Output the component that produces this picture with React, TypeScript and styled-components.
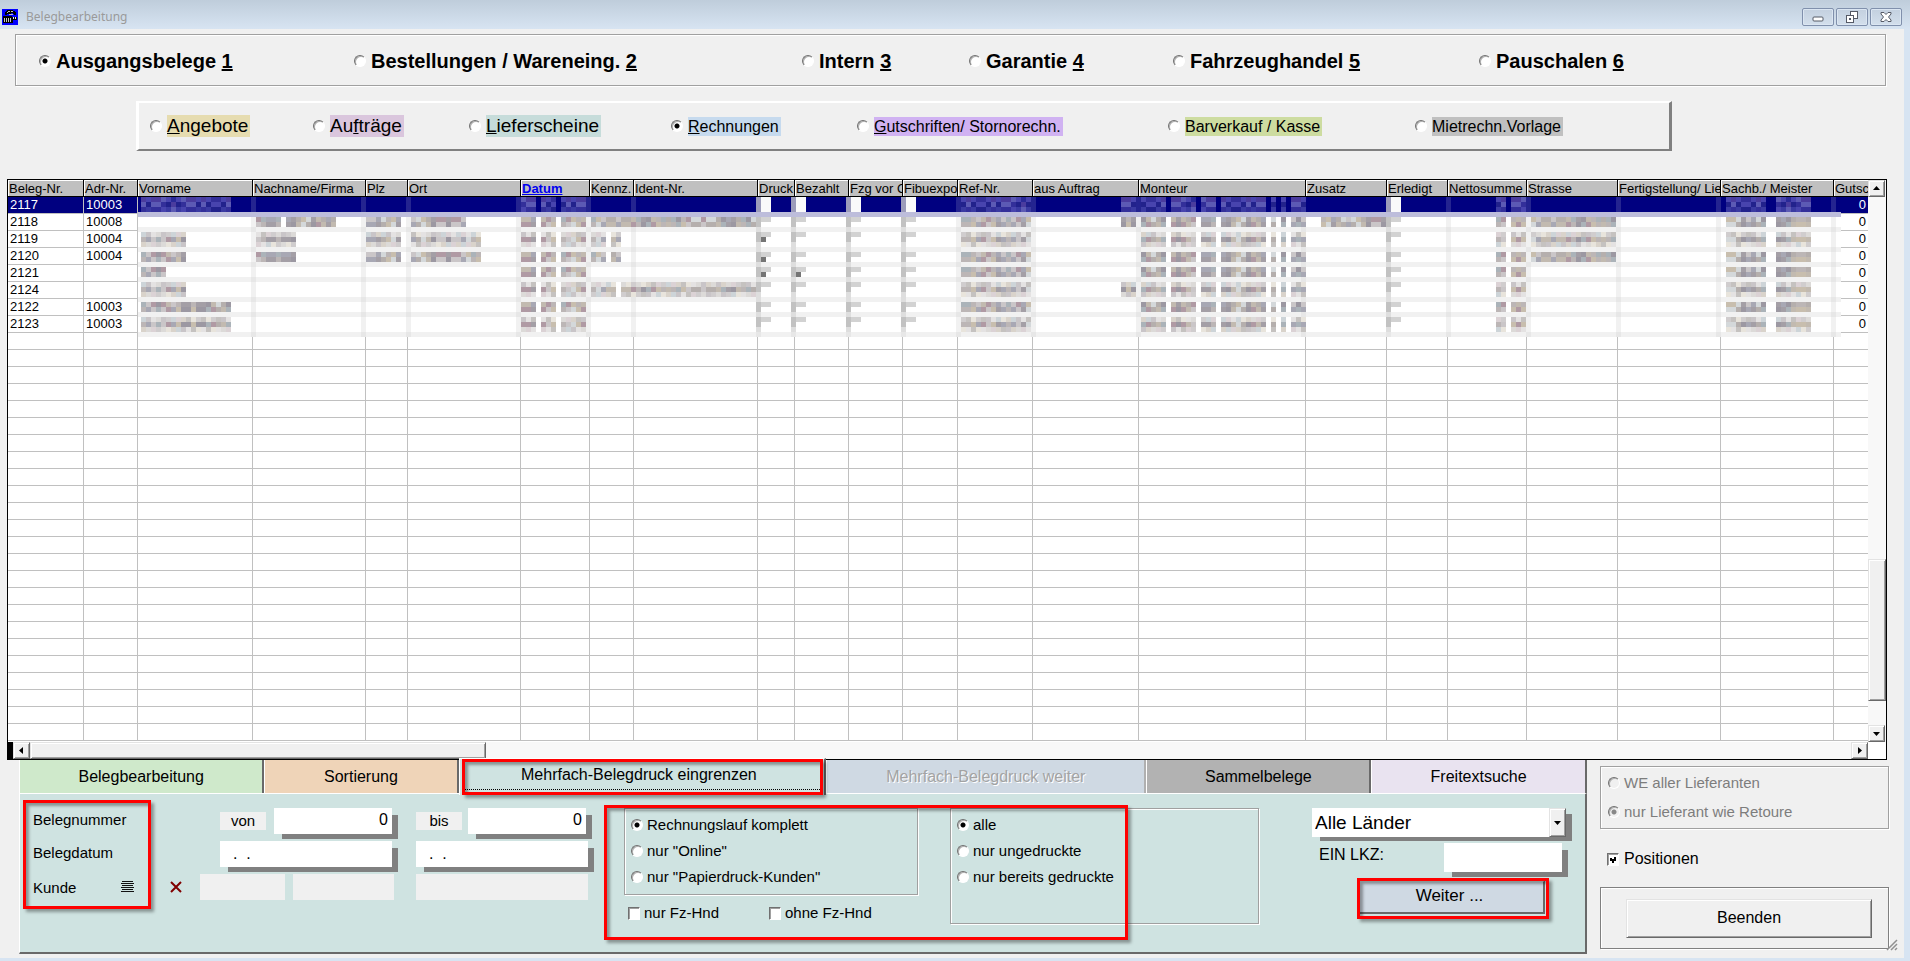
import React from "react";
import styled, { createGlobalStyle, css } from "styled-components";

const Global = createGlobalStyle`
  * { box-sizing: border-box; }
  body {
    margin: 0;
    background: #f0f0f0;
    color: #000;
    font-family: "Liberation Sans", Arial, sans-serif;
    font-size: 15px;
  }
  button, input, select { font: inherit; color: inherit; margin: 0; }
  fieldset { margin: 0; padding: 0; min-width: 0; }
`;

const Window = styled.div`
  display: flex;
  flex-direction: column;
  min-height: 100vh;
  border-bottom: 3px solid #d7e4f2;
`;

const TitleBar = styled.header`
  display: flex;
  align-items: center;
  gap: 8px;
  height: 29px;
  padding: 5px 8px 0 2px;
  background: linear-gradient(#bfcddb, #d7e4f2);
`;

const Title = styled.h1`
  flex: 1;
  margin: 0;
  font: 12px/16px "Noto Sans", "Open Sans", sans-serif;
  color: #9a9a9a;
`;

const WindowButtons = styled.div`
  display: flex;
  gap: 2px;
`;

const WindowButton = styled.button`
  display: flex;
  align-items: center;
  justify-content: center;
  width: 32px;
  height: 18px;
  padding: 0;
  border: 1px solid #8090ac;
  border-radius: 2px;
  background: linear-gradient(#c3d0df, #d3dfec);
  box-shadow: inset 0 0 0 1px #dbe6f2;
`;

const Body = styled.main`
  flex: 1;
  border-right: 6px solid #d7e4f2;
  padding-top: 5px;
`;

const etched = css`
  border: 1px solid #a0a0a0;
  box-shadow: 1px 1px 0 #fff, inset 1px 1px 0 #fff;
`;

const AreaBar = styled.fieldset`
  ${etched}
  display: grid;
  grid-template-columns: 315fr 448fr 167fr 204fr 306fr 406fr;
  align-items: center;
  height: 52px;
  margin: 0 18px 15px 15px;
  padding: 2px 0 0 23px;
`;

const KindBar = styled.fieldset`
  display: grid;
  grid-template-columns: 163fr 156fr 202fr 186fr 311fr 247fr 254fr;
  align-items: center;
  height: 50px;
  margin: 0 232px 28px 136px;
  padding-left: 11px;
  border: solid;
  border-width: 2px 3px 2px 3px;
  border-color: #fff #808080 #808080 #fff;
`;

const Option = styled.label<{ $size: number; $bold?: boolean; $gap?: number; $off?: boolean }>`
  display: flex;
  align-items: center;
  gap: ${(p) => p.$gap ?? 5}px;
  font-size: ${(p) => p.$size}px;
  font-weight: ${(p) => (p.$bold ? 700 : 400)};
  line-height: 18px;
  white-space: nowrap;
  color: ${(p) => (p.$off ? "#7d7d7d" : "#000")};
`;

const Radio = styled.input.attrs({ type: "radio" })`
  appearance: none;
  flex: none;
  width: 12px;
  height: 12px;
  border: 1px solid;
  border-color: #707070 #fff #fff #707070;
  border-radius: 50%;
  background: #fff;
  box-shadow: inset 1px 1px 0 #b0b0b0;
  &:checked {
    background: radial-gradient(circle, #000 0 2px, #fff 3px);
  }
  &:disabled {
    background: #f0f0f0;
  }
  &:disabled:checked {
    background: radial-gradient(circle, #888 0 2px, #f0f0f0 3px);
  }
`;

const Check = styled.input.attrs({ type: "checkbox" })`
  appearance: none;
  flex: none;
  width: 12px;
  height: 13px;
  border: 1px solid;
  border-color: #707070 #fff #fff #707070;
  background: #fff;
  box-shadow: inset 1px 1px 0 #a0a0a0;
  &:checked {
    background: linear-gradient(#000, #000) 4px 5px / 2px 4px no-repeat,
      linear-gradient(#000, #000) 2px 4px / 2px 3px no-repeat,
      linear-gradient(#000, #000) 6px 3px / 2px 4px no-repeat, #fff;
  }
`;

const Tag = styled.span<{ $color: string; $tall?: boolean }>`
  display: block;
  padding-right: 2px;
  line-height: ${(p) => (p.$tall ? 22 : 19)}px;
  background: ${(p) => p.$color};
`;

const GridFrame = styled.section`
  margin: 0 17px 0 7px;
  border: 1px solid #000;
`;

const GridTop = styled.div`
  display: flex;
`;

const TableArea = styled.div`
  position: relative;
  flex: 1;
  min-width: 0;
  padding-bottom: 1px;
  background: #fff;
`;

const Table = styled.table`
  width: 100%;
  table-layout: fixed;
  border-collapse: separate;
  border-spacing: 0;
  font-size: 13px;
`;

const Head = styled.th`
  height: 17px;
  padding: 1px 0 0 1px;
  overflow: hidden;
  border-right: 1px solid #000;
  border-bottom: 1px solid #000;
  background: #c0c0c0;
  box-shadow: inset 1px 1px 0 #fff;
  font-weight: 400;
  line-height: 15px;
  text-align: left;
  white-space: nowrap;
  &:last-child {
    border-right: 0;
  }
`;

const SortLink = styled.a`
  color: #0000f0;
  font-weight: 700;
`;

const Row = styled.tr<{ $selected?: boolean }>`
  background: ${(p) => (p.$selected ? "#000080" : "#fff")};
  color: ${(p) => (p.$selected ? "#fff" : "#000")};
`;

const Cell = styled.td<{ $right?: boolean }>`
  height: 17px;
  padding: 0 2px;
  border-right: 1px solid #c0c0c0;
  border-bottom: 1px solid #c0c0c0;
  line-height: 16px;
  text-align: ${(p) => (p.$right ? "right" : "left")};
  &:last-child {
    border-right: 0;
  }
`;

const Redaction = styled.svg`
  position: absolute;
  left: 128px;
  top: 17px;
`;

const raised = css`
  border: 1px solid;
  border-color: #e3e3e3 #696969 #696969 #e3e3e3;
  background: #f0f0f0;
  box-shadow: inset 1px 1px 0 #fff, inset -1px -1px 0 #a0a0a0;
`;

const ScrollButton = styled.button`
  ${raised}
  display: flex;
  flex: none;
  align-items: center;
  justify-content: center;
  width: 17px;
  height: 17px;
  padding: 0;
`;

const VScroll = styled.div`
  display: flex;
  flex-direction: column;
  width: 18px;
  background: #f8f8f8;
`;

const HScroll = styled.div`
  display: flex;
  height: 17px;
  background: #f8f8f8;
`;

const Thumb = styled.div<{ $share: number }>`
  ${raised}
  flex: ${(p) => p.$share} 1 0;
`;

const Track = styled.div<{ $share: number }>`
  flex: ${(p) => p.$share} 1 0;
`;

const BlackCorner = styled.div`
  width: 5px;
  background: #000;
`;

const WhiteCorner = styled.div`
  width: 18px;
  background: #fff;
`;

const Bottom = styled.section`
  display: flex;
  gap: 13px;
  padding: 0 15px 4px 19px;
`;

const TabArea = styled.div`
  flex: 1;
  min-width: 0;
`;

const Tabs = styled.div`
  display: flex;
  height: 33px;
`;

const Tab = styled.button<{ $share: number; $color: string; $active?: boolean }>`
  position: relative;
  flex: ${(p) => p.$share} 1 0;
  padding: 0;
  border: 0;
  border-left: 1px solid #fff;
  border-right: 2px solid #696969;
  background: ${(p) => p.$color};
  font-size: 16px;
  white-space: nowrap;
  &:disabled {
    border-right-color: #b0b0b0;
    color: #a3a3a3;
    text-shadow: 1px 1px 0 #fff;
  }
  ${(p) =>
    p.$active &&
    css`
      margin: -2px 0 -2px;
      padding: 0 6px 4px 0;
      border-top: 1px solid #fff;
      z-index: 1;
    `}
`;

const FocusLine = styled.span`
  position: absolute;
  left: 4px;
  right: 4px;
  bottom: 5px;
  border-bottom: 1px dotted #000;
`;

const Callout = styled.span<{ $inset: string }>`
  position: absolute;
  inset: ${(p) => p.$inset};
  border: 3px solid #f00;
  box-shadow: 3px 3px 3px rgba(0, 0, 0, 0.35), inset 3px 3px 3px rgba(0, 0, 0, 0.35);
  pointer-events: none;
`;

const Panel = styled.div`
  display: flex;
  height: 161px;
  padding: 14px 14px 0 13px;
  border: solid;
  border-width: 1px 2px 2px 1px;
  border-color: #fff #696969 #696969 #fff;
  background: #cfe3e1;
`;

const Labels = styled.div`
  position: relative;
  width: 108px;
  height: 93px;
`;

const FieldRow = styled.div<{ $indent?: number }>`
  display: flex;
  align-items: center;
  height: 26px;
  margin-bottom: 7px;
  padding-left: ${(p) => p.$indent ?? 0}px;
`;

const Caption = styled.span`
  line-height: 18px;
  padding-bottom: 2px;
`;

const Fields = styled.div`
  margin-left: 29px;
`;

const Mini = styled.label`
  width: 46px;
  background: #f0f0f0;
  line-height: 18px;
  text-align: center;
`;

const TextBox = styled.input<{ $width: number; $start?: boolean; $tall?: boolean }>`
  width: ${(p) => p.$width}px;
  height: ${(p) => (p.$tall ? 29 : 26)}px;
  padding: ${(p) => (p.$start ? "0 4px 0 13px" : "0 4px 2px 4px")};
  border: 0;
  border-radius: 0;
  background: #fff;
  box-shadow: 7px 6px 0 -1px #808080;
  font-size: 16px;
  text-align: ${(p) => (p.$start ? "left" : "right")};
`;

const ReadOnlyBox = styled.input.attrs({ readOnly: true })<{ $width: number }>`
  width: ${(p) => p.$width}px;
  height: 26px;
  border: 0;
  background: #f0f0f0;
`;

const Gap = styled.span<{ $width: number }>`
  flex: none;
  width: ${(p) => p.$width}px;
`;

const IconButton = styled.button`
  display: flex;
  padding: 0;
  border: 0;
  background: none;
`;

const Filters = styled.div`
  position: relative;
  display: flex;
  gap: 32px;
  margin-left: 36px;
`;

const OptionBox = styled.fieldset<{ $width: number; $height: number }>`
  ${etched}
  display: flex;
  flex-direction: column;
  gap: 8px;
  width: ${(p) => p.$width}px;
  height: ${(p) => p.$height}px;
  padding: 7px 0 0 6px;
`;

const CheckRow = styled.div`
  display: flex;
  gap: 50px;
  padding: 9px 0 0 4px;
`;

const Country = styled.div`
  margin-left: auto;
  width: 259px;
`;

const SelectWrap = styled.div`
  position: relative;
  width: 254px;
  height: 29px;
  margin-bottom: 6px;
  background: #fff;
  box-shadow: 7px 5px 0 -1px #808080;
`;

const Select = styled.select`
  appearance: none;
  width: 100%;
  height: 29px;
  padding: 0 0 0 3px;
  border: 0;
  background: none;
  font-size: 19px;
`;

const DropArrow = styled.span`
  ${raised}
  position: absolute;
  top: 0;
  right: 0;
  display: flex;
  align-items: center;
  justify-content: center;
  width: 17px;
  height: 29px;
  pointer-events: none;
`;

const LkzRow = styled.div`
  display: flex;
  justify-content: space-between;
  padding: 0 9px 0 7px;
  font-size: 16px;
  line-height: 24px;
`;

const NextWrap = styled.div`
  position: relative;
  width: 192px;
  height: 41px;
  margin: 6px 0 0 45px;
  padding: 2px 4px 5px 0;
`;

const NextButton = styled.button`
  width: 100%;
  height: 100%;
  padding: 0 3px 3px 0;
  border: 2px solid;
  border-color: #cfe3e1 #696969 #696969 #cfe3e1;
  background: #cfd9e3;
  font-size: 17px;
`;

const Side = styled.aside`
  position: relative;
  width: 289px;
  padding-top: 6px;
`;

const SupplierBox = styled.fieldset`
  ${etched}
  display: flex;
  flex-direction: column;
  gap: 11px;
  height: 63px;
  padding: 7px 0 0 7px;
`;

const PositionRow = styled.div`
  padding: 21px 0 19px 7px;
`;

const QuitBox = styled.div`
  height: 62px;
  padding: 11px 16px 0 25px;
  border: 1px solid #808080;
  box-shadow: inset 1px 1px 0 #fff, 1px 1px 0 #fff;
`;

const QuitButton = styled.button`
  ${raised}
  width: 100%;
  height: 39px;
  padding-bottom: 3px;
  font-size: 16px;
`;

const Grip = styled.svg`
  position: absolute;
  right: -9px;
  bottom: 3px;
`;

const ToolIcon = () => (
  <svg width="16" height="16" viewBox="0 0 16 16" shapeRendering="crispEdges" aria-hidden="true">
    <rect width="16" height="16" fill="#0000ff" />
    <path d="M3 5V3h1V2h1V1h6v1h2v1h1v3h-2V5h-1V4H9v1H5v1H3z" fill="#000" />
    <path d="M5 3h1V2h2v1H6v1H5zM9 2h2v1H9zM7 5h4v1H7z" fill="#c0c0c0" />
    <path d="M1 7h9v1h5v3h-4v3H1z" fill="#000" />
    <path d="M2 9h1v4H2zM4 9h1v4H4zM6 9h1v4H6zM8 9h1v4H8z" fill="#c8c8c8" />
    <path d="M11 8h1v2h-1zM13 8h1v2h-1z" fill="#e8e8e8" />
  </svg>
);

const Arrow = ({ dir }: { dir: "up" | "down" | "left" | "right" }) => {
  const shapes = {
    up: "M1 6h7L4.500 2z",
    down: "M1 3h7L4.500 7z",
    left: "M6 1v7L2 4.500z",
    right: "M3 1v7l4-3.500z",
  };
  return (
    <svg width="9" height="9" viewBox="0 0 9 9" aria-hidden="true">
      <path d={shapes[dir]} fill="#000" />
    </svg>
  );
};

const columns: [string, number | null][] = [
  ["Beleg-Nr.", 76], ["Adr-Nr.", 54], ["Vorname", 115], ["Nachname/Firma", 113], ["Plz", 42],
  ["Ort", 113], ["Datum", 69], ["Kennz.", 44], ["Ident-Nr.", 124], ["Druck", 37],
  ["Bezahlt", 54], ["Fzg vor O", 54], ["Fibuexpo", 55], ["Ref-Nr.", 75], ["aus Auftrag", 106],
  ["Monteur", 167], ["Zusatz", 81], ["Erledigt", 61], ["Nettosumme", 79], ["Strasse", 91],
  ["Fertigstellung/ Lie", 103], ["Sachb./ Meister", 113], ["Gutsc", null],
];

const records = [
  ["2117", "10003"], ["2118", "10008"], ["2119", "10004"], ["2120", "10004"],
  ["2121", ""], ["2124", ""], ["2122", "10003"], ["2123", "10003"],
];
const ROWS = 32;

/* Masked customer data: a mosaic of 5px blocks over the personal columns. */
const OX = 136;
const bandsX = [251, 361, 406, 516, 586, 631, 756, 791, 846, 901, 956, 1031, 1136, 1301, 1386, 1446, 1526, 1616, 1716, 1831];
const bandsY = [6, 10, 13, 16, 20, 23, 27];
const lineStart = [0, 4, 7, 11, 14, 17, 21, 24];
const lineCount = [3, 2, 3, 2, 2, 3, 2, 3];
const all = [0, 1, 2, 3, 4, 5, 6, 7];
const smudges: { x: number; n: number; rows: number[] }[] = [
  { x: 141, n: 18, rows: [0, 6, 7] }, { x: 141, n: 9, rows: [2, 3, 5] }, { x: 141, n: 5, rows: [4] },
  { x: 256, n: 5, rows: [1] }, { x: 286, n: 10, rows: [1] }, { x: 256, n: 8, rows: [2, 3] },
  { x: 366, n: 7, rows: [1, 2, 3] }, { x: 411, n: 11, rows: [1] }, { x: 411, n: 14, rows: [2, 3] },
  { x: 521, n: 3, rows: all }, { x: 541, n: 3, rows: all }, { x: 561, n: 5, rows: all },
  { x: 591, n: 34, rows: [1] }, { x: 591, n: 3, rows: [2, 3] }, { x: 611, n: 2, rows: [2, 3] },
  { x: 591, n: 5, rows: [5] }, { x: 621, n: 27, rows: [5] },
  { x: 961, n: 14, rows: all }, { x: 1121, n: 3, rows: [0, 1, 5] },
  { x: 1141, n: 5, rows: all }, { x: 1171, n: 5, rows: all }, { x: 1201, n: 3, rows: all },
  { x: 1221, n: 9, rows: all }, { x: 1271, n: 1, rows: all }, { x: 1281, n: 1, rows: all }, { x: 1291, n: 3, rows: all },
  { x: 1321, n: 13, rows: [1] }, { x: 1496, n: 2, rows: all }, { x: 1511, n: 3, rows: all },
  { x: 1531, n: 17, rows: [1, 2, 3] }, { x: 1726, n: 8, rows: all }, { x: 1776, n: 7, rows: all },
];
const checks = [756, 791, 846, 901, 1386];
const darkTones = ["#a49fa6", "#b5afad", "#9c98a2", "#c2bab0", "#abb3b9", "#b09aa4", "#bcb6b6", "#cac6c8", "#c8beae", "#a8a8b4", "#d4d8da"];
const lightTones = ["#d0cdce", "#dcdad8", "#c9c5c8", "#d9d3cb", "#cdd4d8", "#dbd2d5", "#e4e2e2", "#c5c2c0", "#e8e4dc"];
const blueTones = ["#2a2a98", "#3a3aa2", "#22228c", "#4844ae", "#332f9a", "#5c5ab4", "#4a3c9e"];

const pick = (tones: string[], a: number, b: number) => tones[(a * 7 + b * 13 + ((a * a) % 17) * 3) % tones.length];

const Mosaic = () => {
  const blocks: React.ReactNode[] = [];
  const put = (x: number, row: number, fill: string, w = 5, h = 5) =>
    blocks.push(<rect key={blocks.length} x={x - OX} y={row * 5} width={w} height={h} fill={fill} />);
  put(OX + 2, 4, "#fff", 1703, 120);
  put(OX + 2, 3, "#bdbddb", 1703);
  bandsX.forEach((x) => {
    put(x, 0, "#242490", 5, 15);
    put(x, 4, "#f1f1f1", 5, 120);
  });
  bandsY.forEach((r) => put(OX + 2, r, "#f1f1f1", 1703));
  bandsX.forEach((x) => bandsY.forEach((r) => put(x, r, "#e7e7e7")));
  smudges.forEach(({ x, n, rows }) =>
    rows.forEach((r) => {
      for (let i = 0; i < n; i++) {
        for (let k = 0; k < lineCount[r]; k++) {
          const bx = x + i * 5;
          const dark = lineCount[r] === 2 || k === 1;
          const tones = r === 0 ? blueTones : dark ? darkTones : lightTones;
          put(bx, lineStart[r] + k, pick(tones, (bx - 1) / 5, k));
        }
      }
    }),
  );
  checks.forEach((x) => {
    put(x, 0, "#9c9cba", 5, 15);
    put(x + 5, 0, "#fafafa", 10, 15);
    put(x, 4, "#dedede", 5, 115);
    all.slice(1).forEach((r) => {
      put(x, lineStart[r], "#c2c2c2", 5, 10);
      put(x + 5, lineStart[r], "#d2d2d2", 10);
    });
  });
  [[761, 8], [761, 12], [761, 15], [796, 15]].forEach(([x, r]) => put(x, r, "#757575"));
  return (
    <Redaction width="1705" height="140" shapeRendering="crispEdges" aria-hidden="true">
      {blocks}
    </Redaction>
  );
};

const RadioOption = (props: {
  name: string; size: number; bold?: boolean; gap?: number; checked?: boolean; off?: boolean; children: React.ReactNode;
}) => (
  <Option $size={props.size} $bold={props.bold} $gap={props.gap} $off={props.off}>
    <Radio name={props.name} defaultChecked={props.checked} disabled={props.off} />
    <span>{props.children}</span>
  </Option>
);

export default function App() {
  return (
    <Window>
      <Global />
      <TitleBar>
        <ToolIcon />
        <Title>Belegbearbeitung</Title>
        <WindowButtons>
          <WindowButton aria-label="Minimieren">
            <svg width="12" height="12" viewBox="0 0 12 12"><rect x="1" y="6" width="10" height="4" rx="1" fill="#fff" stroke="#555a66" /></svg>
          </WindowButton>
          <WindowButton aria-label="Wiederherstellen">
            <svg width="12" height="12" viewBox="0 0 12 12" fill="#fff" stroke="#555a66" shapeRendering="crispEdges">
              <path d="M4.500 .5h7v7h-7z" /><path d="M.5 4.500h7v7h-7z" /><path d="M3.500 7.500h1v1h-1z" />
            </svg>
          </WindowButton>
          <WindowButton aria-label="Schließen">
            <svg width="12" height="12" viewBox="0 0 12 12">
              <path d="M1 1.500h3l2 2 2-2h3v1.500L8.500 6 11 9v1.500H8l-2-2-2 2H1V9l2.500-3L1 3z" fill="#fff" stroke="#555a66" />
            </svg>
          </WindowButton>
        </WindowButtons>
      </TitleBar>

      <Body>
        <AreaBar aria-label="Bereich">
          <RadioOption name="area" size={20} bold checked>Ausgangsbelege <u>1</u></RadioOption>
          <RadioOption name="area" size={20} bold>Bestellungen / Wareneing. <u>2</u></RadioOption>
          <RadioOption name="area" size={20} bold>Intern <u>3</u></RadioOption>
          <RadioOption name="area" size={20} bold>Garantie <u>4</u></RadioOption>
          <RadioOption name="area" size={20} bold>Fahrzeughandel <u>5</u></RadioOption>
          <RadioOption name="area" size={20} bold>Pauschalen <u>6</u></RadioOption>
        </AreaBar>

        <KindBar aria-label="Belegart">
          <RadioOption name="kind" size={19}><Tag $tall $color="#e6dcb0"><u>A</u>ngebote</Tag></RadioOption>
          <RadioOption name="kind" size={19}><Tag $tall $color="#dac6dd">Au<u>f</u>träge</Tag></RadioOption>
          <RadioOption name="kind" size={19}><Tag $tall $color="#c6dcda"><u>L</u>ieferscheine</Tag></RadioOption>
          <RadioOption name="kind" size={16} checked><Tag $color="#c6daee"><u>R</u>echnungen</Tag></RadioOption>
          <RadioOption name="kind" size={16}><Tag $color="#d0b2f2"><u>G</u>utschriften/ Stornorechn.</Tag></RadioOption>
          <RadioOption name="kind" size={16}><Tag $color="#cddca0">Barverkauf / Kasse</Tag></RadioOption>
          <RadioOption name="kind" size={16}><Tag $color="#c0c0c0">Mietrechn.Vorlage</Tag></RadioOption>
        </KindBar>

        <GridFrame>
          <GridTop>
            <TableArea>
              <Table>
                <colgroup>
                  {columns.map(([name, w]) => <col key={name} width={w ?? undefined} />)}
                </colgroup>
                <thead>
                  <tr>
                    {columns.map(([name]) => (
                      <Head key={name} scope="col">
                        {name === "Datum" ? <SortLink href="#datum">{name}</SortLink> : name}
                      </Head>
                    ))}
                  </tr>
                </thead>
                <tbody>
                  {Array.from({ length: ROWS }, (_, r) => (
                    <Row key={r} $selected={r === 0}>
                      {columns.map(([name], c) => (
                        <Cell key={name} $right={c === columns.length - 1}>
                          {records[r] && (c < 2 ? records[r][c] : c === columns.length - 1 ? "0" : "")}
                        </Cell>
                      ))}
                    </Row>
                  ))}
                </tbody>
              </Table>
              <Mosaic />
            </TableArea>
            <VScroll>
              <ScrollButton aria-label="Nach oben"><Arrow dir="up" /></ScrollButton>
              <Track $share={364} />
              <Thumb $share={141} />
              <Track $share={24} />
              <ScrollButton aria-label="Nach unten"><Arrow dir="down" /></ScrollButton>
            </VScroll>
          </GridTop>
          <HScroll>
            <BlackCorner />
            <ScrollButton aria-label="Nach links"><Arrow dir="left" /></ScrollButton>
            <Thumb $share={454} />
            <Track $share={1367} />
            <ScrollButton aria-label="Nach rechts"><Arrow dir="right" /></ScrollButton>
            <WhiteCorner />
          </HScroll>
        </GridFrame>

        <Bottom>
          <TabArea>
            <Tabs role="tablist">
              <Tab role="tab" $share={246} $color="#cfe9cb">Belegbearbeitung</Tab>
              <Tab role="tab" $share={194} $color="#efd4b8">Sortierung</Tab>
              <Tab role="tab" aria-selected $share={364} $color="#cfe3e1" $active>
                Mehrfach-Belegdruck eingrenzen
                <FocusLine />
                <Callout $inset="0 1px 0 2px" />
              </Tab>
              <Tab role="tab" $share={322} $color="#cfd9e3" disabled>Mehrfach-Belegdruck weiter</Tab>
              <Tab role="tab" $share={225} $color="#b2b2b2">Sammelbelege</Tab>
              <Tab role="tab" $share={216} $color="#e9e3f0">Freitextsuche</Tab>
            </Tabs>
            <Panel role="tabpanel">
              <Labels>
                <FieldRow><Caption>Belegnummer</Caption></FieldRow>
                <FieldRow><Caption>Belegdatum</Caption></FieldRow>
                <FieldRow>
                  Kunde
                  <Gap $width={45} />
                  <IconButton aria-label="Kundenliste">
                    <svg width="13" height="12" viewBox="0 0 13 12" shapeRendering="crispEdges">
                      <path d="M1 0h11v1H1zM0 2h13v1H0zM1 4h11v1H1zM0 6h13v1H0zM1 8h11v1H1zM0 10h13v1H0z" fill="#111" />
                    </svg>
                  </IconButton>
                </FieldRow>
                <Callout $inset="-8px -10px" />
              </Labels>
              <Fields>
                <FieldRow $indent={50}>
                  <Mini htmlFor="nr-von">von</Mini><Gap $width={8} />
                  <TextBox id="nr-von" $width={118} defaultValue="0" /><Gap $width={24} />
                  <Mini htmlFor="nr-bis">bis</Mini><Gap $width={6} />
                  <TextBox id="nr-bis" $width={118} defaultValue="0" />
                </FieldRow>
                <FieldRow $indent={50}>
                  <TextBox aria-label="Belegdatum von" $width={172} $start defaultValue=".  ." /><Gap $width={24} />
                  <TextBox aria-label="Belegdatum bis" $width={172} $start defaultValue=".  ." />
                </FieldRow>
                <FieldRow>
                  <IconButton aria-label="Kunde löschen">
                    <svg width="12" height="12" viewBox="0 0 12 12">
                      <path d="M1 1l10 10M11 1L1 11" stroke="#800000" strokeWidth="2" />
                    </svg>
                  </IconButton>
                  <Gap $width={18} />
                  <ReadOnlyBox aria-label="Kundennummer" $width={85} /><Gap $width={8} />
                  <ReadOnlyBox aria-label="Vorname" $width={101} /><Gap $width={22} />
                  <ReadOnlyBox aria-label="Nachname" $width={172} />
                </FieldRow>
              </Fields>

              <Filters>
                <div>
                  <OptionBox $width={294} $height={87} aria-label="Rechnungslauf">
                    <RadioOption name="run" size={15} gap={4} checked>Rechnungslauf komplett</RadioOption>
                    <RadioOption name="run" size={15} gap={4}>nur "Online"</RadioOption>
                    <RadioOption name="run" size={15} gap={4}>nur "Papierdruck-Kunden"</RadioOption>
                  </OptionBox>
                  <CheckRow>
                    <Option $size={15} $gap={4}><Check />nur Fz-Hnd</Option>
                    <Option $size={15} $gap={4}><Check />ohne Fz-Hnd</Option>
                  </CheckRow>
                </div>
                <OptionBox $width={309} $height={116} aria-label="Druckstatus">
                  <RadioOption name="printed" size={15} gap={4} checked>alle</RadioOption>
                  <RadioOption name="printed" size={15} gap={4}>nur ungedruckte</RadioOption>
                  <RadioOption name="printed" size={15} gap={4}>nur bereits gedruckte</RadioOption>
                </OptionBox>
                <Callout $inset="-3px 131px 12px -20px" />
              </Filters>

              <Country>
                <SelectWrap>
                  <Select aria-label="Land" defaultValue="alle"><option value="alle">Alle Länder</option></Select>
                  <DropArrow><Arrow dir="down" /></DropArrow>
                </SelectWrap>
                <LkzRow>
                  <label htmlFor="lkz">EIN LKZ:</label>
                  <TextBox id="lkz" $width={118} $tall />
                </LkzRow>
                <NextWrap>
                  <NextButton>Weiter ...</NextButton>
                  <Callout $inset="0" />
                </NextWrap>
              </Country>
            </Panel>
          </TabArea>

          <Side>
            <SupplierBox aria-label="Wareneingang">
              <RadioOption name="supplier" size={15} gap={4} off>WE aller Lieferanten</RadioOption>
              <RadioOption name="supplier" size={15} gap={4} off checked>nur Lieferant wie Retoure</RadioOption>
            </SupplierBox>
            <PositionRow>
              <Option $size={16}><Check defaultChecked />Positionen</Option>
            </PositionRow>
            <QuitBox><QuitButton>Beenden</QuitButton></QuitBox>
            <Grip width="12" height="12" viewBox="0 0 12 12" aria-hidden="true">
              <path d="M1 11L11 1M5 11l6-6M9 11l2-2" stroke="#909090" strokeWidth="1.500" />
            </Grip>
          </Side>
        </Bottom>
      </Body>
    </Window>
  );
}
